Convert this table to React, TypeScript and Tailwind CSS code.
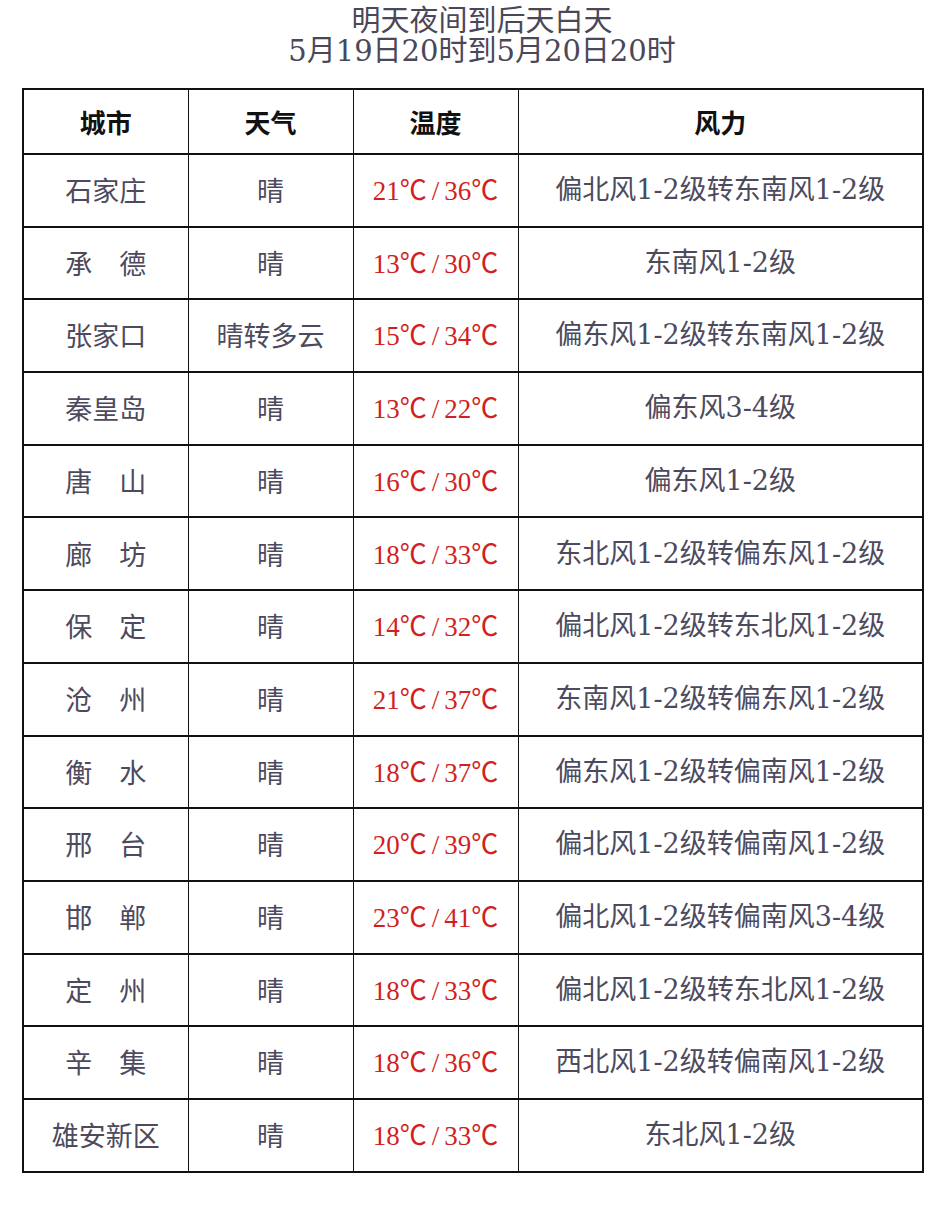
import React from 'react';

const rows: [string, string, [string, string], string][] = [
  ['石家庄', '晴', ['21', '36'], '偏北风1-2级转东南风1-2级'],
  ['承　德', '晴', ['13', '30'], '东南风1-2级'],
  ['张家口', '晴转多云', ['15', '34'], '偏东风1-2级转东南风1-2级'],
  ['秦皇岛', '晴', ['13', '22'], '偏东风3-4级'],
  ['唐　山', '晴', ['16', '30'], '偏东风1-2级'],
  ['廊　坊', '晴', ['18', '33'], '东北风1-2级转偏东风1-2级'],
  ['保　定', '晴', ['14', '32'], '偏北风1-2级转东北风1-2级'],
  ['沧　州', '晴', ['21', '37'], '东南风1-2级转偏东风1-2级'],
  ['衡　水', '晴', ['18', '37'], '偏东风1-2级转偏南风1-2级'],
  ['邢　台', '晴', ['20', '39'], '偏北风1-2级转偏南风1-2级'],
  ['邯　郸', '晴', ['23', '41'], '偏北风1-2级转偏南风3-4级'],
  ['定　州', '晴', ['18', '33'], '偏北风1-2级转东北风1-2级'],
  ['辛　集', '晴', ['18', '36'], '西北风1-2级转偏南风1-2级'],
  ['雄安新区', '晴', ['18', '33'], '东北风1-2级'],
];

const cjk = { fontFamily: '"Noto Sans CJK SC", sans-serif' };
const wide = { fontFamily: '"DejaVu Serif", "Noto Sans CJK SC", serif' };
const narrow = { fontFamily: '"Liberation Serif", "Noto Sans CJK SC", serif' };

const Temp = ({ lo, hi }: { lo: string; hi: string }) => (
  <span style={narrow}>
    {lo}
    <span style={cjk}>℃</span>
    <span className="inline-block px-[5px]">/</span>
    {hi}
    <span style={cjk}>℃</span>
  </span>
);

const App = () => {
  return (
    <div className="min-h-screen bg-white" style={cjk}>
      <div className="pt-[6px] pl-[22px] text-center text-[29px] leading-[30px] text-[#4a4858]" style={wide}>
        <div className="h-[30px]">明天夜间到后天白天</div>
        <div className="h-[30px]">5月19日20时到5月20日20时</div>
      </div>

      <table className="ml-[22px] mt-[22px] w-[900px] table-fixed border-collapse border-2 border-[#111]">
        <colgroup>
          <col className="w-[165px]" />
          <col className="w-[165px]" />
          <col className="w-[165px]" />
          <col className="w-[405px]" />
        </colgroup>
        <thead>
          <tr className="h-[65px] text-[26px] font-bold text-[#111]">
            <th className="border-b-2 border-r border-[#111]">城市</th>
            <th className="border-b-2 border-r border-[#111]">天气</th>
            <th className="border-b-2 border-r border-[#111]">温度</th>
            <th className="border-b-2 border-[#111]">风力</th>
          </tr>
        </thead>
        <tbody>
          {rows.map(([city, weather, [lo, hi], wind], i) => (
            <tr key={i} className="h-[72.7px] text-[27px] text-[#4d4a5e]">
              <td className="border-b-2 border-r border-[#111] text-center">{city}</td>
              <td className="border-b-2 border-r border-[#111] text-center">{weather}</td>
              <td className="border-b-2 border-r border-[#111] text-center whitespace-nowrap text-[#d21f1f]">
                <Temp lo={lo} hi={hi} />
              </td>
              <td className="border-b-2 border-[#111] text-center whitespace-nowrap" style={wide}>
                {wind}
              </td>
            </tr>
          ))}
        </tbody>
      </table>
    </div>
  );
};

export default App;
